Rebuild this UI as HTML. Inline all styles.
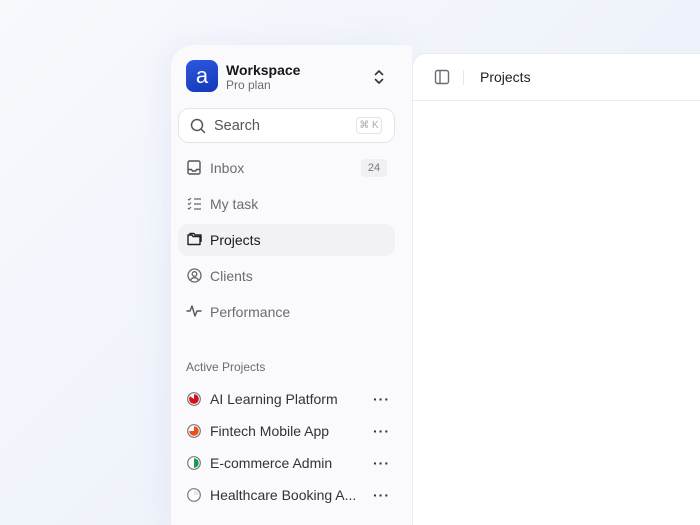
<!DOCTYPE html>
<html><head><style>
*{margin:0;padding:0;box-sizing:border-box}
html,body{width:700px;height:525px;overflow:hidden}
body{background:linear-gradient(135deg,#f7f9fd 0%,#eef2fa 60%,#e9eef8 100%);font-family:"Liberation Sans",sans-serif;position:relative}
.side{position:absolute;left:171px;top:45px;width:241px;height:480px;background:#faf9fc;border-radius:22px 0 0 0;box-shadow:-6px 0 30px rgba(170,180,210,.15)}
.main{position:absolute;left:412px;top:53px;width:310px;height:472px;background:#fff;border:1px solid #ebebf0;border-right:none;border-bottom:none;border-radius:14px 0 0 0}
.hdr{height:47px;border-bottom:1px solid #ececf1;position:relative}
.t{position:absolute;font-size:14px;color:#6b6b74;white-space:nowrap}
svg{position:absolute}
.dots{position:absolute;left:373px;color:#333;font-weight:bold;letter-spacing:1px;font-size:14px;line-height:10px}
</style></head><body>
<div class="side"></div>
<div class="main"><div class="hdr">
<svg style="left:21px;top:15px" width="16" height="16" viewBox="0 0 16 16" fill="none" stroke="#6b6b74" stroke-width="1.4"><rect x="1.5" y="1.5" width="13" height="13" rx="2"/><line x1="6" y1="1.5" x2="6" y2="14.5"/></svg>
<div style="position:absolute;left:50px;top:16px;width:1px;height:15px;background:#e5e5ea"></div>
<div style="position:absolute;left:67px;top:15px;font-size:14px;color:#222">Projects</div>
</div></div>

<div style="position:absolute;left:186px;top:60px;width:32px;height:32px;border-radius:8px;background:linear-gradient(160deg,#2f58e0,#1338b8);color:#fff;font-size:22px;text-align:center;line-height:31px">a</div>
<div class="t" style="left:226px;top:62px;color:#16161c;font-weight:bold;font-size:14px">Workspace</div>
<div class="t" style="left:226px;top:78px;font-size:12px">Pro plan</div>
<svg style="left:373px;top:69px" width="12" height="16" viewBox="0 0 12 16" fill="none" stroke="#333" stroke-width="1.6" stroke-linecap="round" stroke-linejoin="round"><path d="M2.5 5.5 6 2 9.5 5.5M2.5 10.5 6 14 9.5 10.5"/></svg>

<div style="position:absolute;left:178px;top:108px;width:217px;height:35px;background:#fff;border:1px solid #e3e3ea;border-radius:11px"></div>
<svg style="left:190px;top:118px" width="16" height="16" viewBox="0 0 16 16" fill="none" stroke="#555" stroke-width="1.5" stroke-linecap="round"><circle cx="7" cy="7" r="5.5"/><path d="M11 11l3.5 3.5"/></svg>
<div class="t" style="left:214px;top:118px;font-size:14.5px;color:#555">Search</div>
<div style="position:absolute;left:356px;top:117px;width:26px;height:17px;border:1px solid #e3e3ea;border-radius:4px;font-size:10px;color:#aaa;text-align:center;line-height:15px">⌘ K</div>

<div style="position:absolute;left:178px;top:224px;width:217px;height:32px;background:#f2f1f5;border-radius:10px"></div>

<svg style="left:187px;top:160px" width="14" height="15" viewBox="0 0 14 15" fill="none" stroke="#555" stroke-width="1.4"><rect x="1" y="1" width="12" height="13" rx="1.5"/><path d="M1 9.5h3.5l1 1.5h3l1-1.5H13"/></svg>
<div class="t" style="left:210px;top:160px">Inbox</div>
<div style="position:absolute;left:361px;top:159px;width:26px;height:18px;background:#f0eff3;border-radius:4px;font-size:11px;color:#777;text-align:center;line-height:18px">24</div>

<svg style="left:187px;top:197px" width="15" height="14" viewBox="0 0 15 14" fill="none" stroke="#666" stroke-width="1.2"><path d="M1 2l1 1 2-2M1 6.5l1 1 2-2M1 11l1 1 2-2M7 2h7M7 7h7M7 12h7"/></svg>
<div class="t" style="left:210px;top:196px">My task</div>

<svg style="left:187px;top:232px" width="15" height="14" viewBox="0 0 15 14" fill="none" stroke="#222" stroke-width="1.4" stroke-linejoin="round"><path d="M1 3h4l1 1.5h7v8H1z"/><path d="M3 3V1.5h4l1 1.5h6v7"/></svg>
<div class="t" style="left:210px;top:232px;color:#18181d">Projects</div>

<svg style="left:187px;top:268px" width="15" height="15" viewBox="0 0 15 15" fill="none" stroke="#666" stroke-width="1.3"><circle cx="7.5" cy="7.5" r="6.5"/><circle cx="7.5" cy="6" r="2.3"/><path d="M3.5 12.2c1-1.8 2.3-2.5 4-2.5s3 .7 4 2.5"/></svg>
<div class="t" style="left:210px;top:268px">Clients</div>

<svg style="left:186px;top:304px" width="16" height="14" viewBox="0 0 16 14" fill="none" stroke="#555" stroke-width="1.4" stroke-linejoin="round" stroke-linecap="round"><path d="M1 7h3l2-5 3 10 2-5h4"/></svg>
<div class="t" style="left:210px;top:304px">Performance</div>

<div class="t" style="left:186px;top:360px;font-size:12px">Active Projects</div>

<svg style="left:187px;top:392px" width="14" height="14" viewBox="0 0 14 14"><circle cx="7" cy="7" r="6.3" fill="#fff" stroke="#777" stroke-width="1.2"/><path d="M7 7V2.2A4.8 4.8 0 1 1 3 4.3Z" fill="#d4101c"/></svg>
<div class="t" style="left:210px;top:391px;color:#333">AI Learning Platform</div>
<svg style="left:187px;top:424px" width="14" height="14" viewBox="0 0 14 14"><circle cx="7" cy="7" r="6.3" fill="#fff" stroke="#777" stroke-width="1.2"/><path d="M7 7h4.8A4.8 4.8 0 1 1 2.2 7Z" fill="#e8501c"/><path d="M7 7V2.2A4.8 4.8 0 0 1 11.8 7Z" fill="#e8501c"/></svg>
<div class="t" style="left:210px;top:423px;color:#333">Fintech Mobile App</div>
<svg style="left:187px;top:456px" width="14" height="14" viewBox="0 0 14 14"><circle cx="7" cy="7" r="6.3" fill="#fff" stroke="#777" stroke-width="1.2"/><path d="M7 2.2A4.8 4.8 0 0 1 7 11.8Z" fill="#1a9a5a"/></svg>
<div class="t" style="left:210px;top:455px;color:#333">E-commerce Admin</div>
<svg style="left:187px;top:488px" width="14" height="14" viewBox="0 0 14 14"><circle cx="7" cy="7" r="6.3" fill="#fff" stroke="#777" stroke-width="1.2"/><path d="M7 7V2.2A4.8 4.8 0 0 1 11.8 7Z" fill="#e4e6ee"/></svg>
<div class="t" style="left:210px;top:487px;color:#333">Healthcare Booking A...</div>

<div class="dots" style="top:394px">···</div>
<div class="dots" style="top:426px">···</div>
<div class="dots" style="top:458px">···</div>
<div class="dots" style="top:490px">···</div>
</body></html>
